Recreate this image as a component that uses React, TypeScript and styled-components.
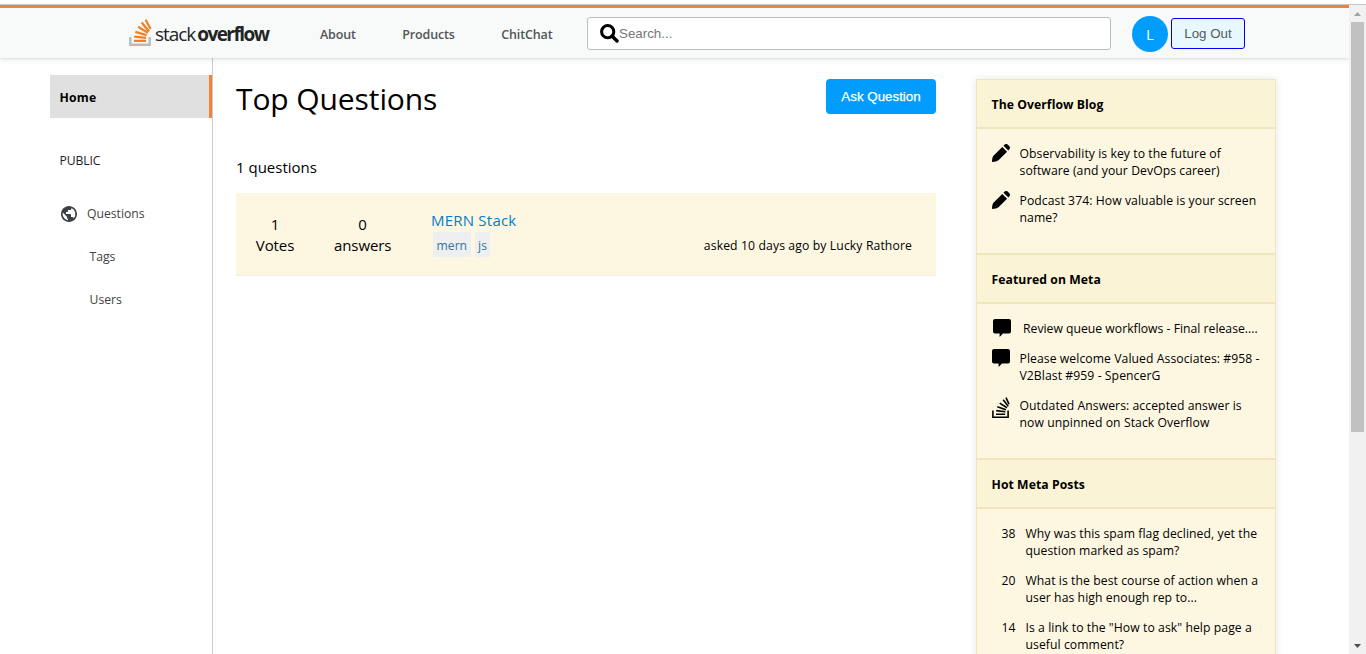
import React from 'react';
import styled, { createGlobalStyle } from 'styled-components';

const ui = `"Segoe UI", "Open Sans", "Noto Sans", sans-serif`;
const control = `"Liberation Sans", Arial, sans-serif`;

const GlobalStyle = createGlobalStyle`
  * { box-sizing: border-box; }
  body { margin: 0; background: #fff; font-family: ${ui}; font-weight: 400; color: #000; overflow: hidden; }
  h1, h4, p { margin: 0; font-weight: inherit; }
`;

const Window = styled.div`
  height: 654px;
  display: flex;
  flex-direction: column;
  overflow: hidden;
`;
const TopEdge = styled.div`
  flex: none;
  height: 5px;
  border-bottom: 1px solid #c6c8ca;
`;
const Viewport = styled.div`
  flex: 1;
  min-height: 0;
  display: flex;
`;
const Page = styled.div`
  width: 1349px;
  display: flex;
  flex-direction: column;
  overflow: hidden;
`;
const Scrollbar = styled.div`
  width: 17px;
  background: #f1f1f1;
  display: flex;
  flex-direction: column;
  align-items: center;
`;
const Arrow = styled.div<{ $down?: boolean }>`
  height: 17px;
  width: 17px;
  display: flex;
  align-items: center;
  justify-content: center;
  margin-top: ${p => (p.$down ? 'auto' : '0')};
  color: ${p => (p.$down ? '#505050' : '#a3a3a3')};
  svg { display: block; transform: ${p => (p.$down ? 'rotate(180deg)' : 'none')}; }
`;
const Thumb = styled.div`
  width: 13px;
  height: 410px;
  background: #c1c1c1;
`;

const Header = styled.header`
  position: relative;
  z-index: 1;
  flex: none;
  height: 53px;
  padding-left: 129px;
  border-top: 3px solid #f48236;
  background: #f8f9f9;
  box-shadow: 0 1px 2px rgba(0, 0, 0, 0.08), 0 2px 6px rgba(0, 0, 0, 0.08);
  display: flex;
  align-items: center;
`;
const Logo = styled.a`
  display: flex;
  width: 141px;
  height: 32px;
  svg { flex: none; margin-top: 1px; }
`;
const LogoText = styled.span`
  margin: 6px 0 0 3px;
  font: 400 19px/22px "Open Sans", sans-serif;
  letter-spacing: -1.05px;
  color: #222426;
  white-space: nowrap;
  b { font-weight: 700; margin-left: 2px; letter-spacing: -1.55px; }
`;
const Nav = styled.nav`
  display: flex;
  margin: 3px 0 0 50px;
  gap: 46.5px;
  width: 267px;
`;
const NavLink = styled.a`
  font: 600 12.5px/20px ${ui};
  letter-spacing: -0.15px;
  color: #525457;
`;
const Search = styled.div`
  width: 524px;
  height: 33px;
  border: 1px solid #bbbdbf;
  border-radius: 3px;
  background: #fff;
  display: flex;
  align-items: center;
  padding-left: 12px;
  color: #757575;
  font: 400 13.33px/16px ${control};
  span { padding-top: 2px; }
`;
const Avatar = styled.div`
  width: 36px;
  height: 36px;
  margin: 1px 3px 0 21px;
  border-radius: 50%;
  background: #009dff;
  color: #fff;
  display: flex;
  align-items: center;
  justify-content: center;
  font-size: 15px;
  line-height: 20px;
`;
const LogOut = styled.button`
  width: 74px;
  height: 31px;
  margin: 0;
  padding: 1px 0 0;
  border: 1px solid #0000ee;
  border-radius: 3px;
  background: #e7f8fe;
  color: #56595c;
  font: 400 13.33px/20px ${control};
`;

const Columns = styled.div`
  flex: 1;
  min-height: 0;
  display: flex;
  padding-left: 50px;
`;
const Sidebar = styled.aside`
  width: 163px;
  border-right: 1px solid #ccc;
  padding-top: 17px;
`;
const SideItem = styled.div<{ $active?: boolean; $indent?: number }>`
  height: 43px;
  display: flex;
  align-items: center;
  padding-left: ${p => p.$indent ?? 9.5}px;
  font-size: 12.2px;
  line-height: 17px;
  color: #404244;
  ${p => p.$active && `
    padding-top: 1px;
    background: #e0e0e0;
    border-right: 3px solid #f48236;
    font-weight: 700;
    letter-spacing: 0.2px;
    color: #000;
  `}
  svg { margin-right: 9.5px; }
`;
const SideLabel = styled.div`
  margin: 21px 0 10px;
  padding: 1px 0 0 9.5px;
  height: 43px;
  line-height: 42px;
  font-size: 12.2px;
  letter-spacing: -0.1px;
  color: #202224;
`;

const Main = styled.main`
  width: 700px;
  margin-left: 23px;
  padding-top: 20px;
`;
const TitleRow = styled.div`
  display: flex;
  justify-content: space-between;
`;
const Title = styled.h1`
  font-size: 30px;
  line-height: 41px;
  letter-spacing: -0.1px;
  white-space: nowrap;
`;
const AskButton = styled.button`
  width: 110px;
  height: 35px;
  margin-top: 1px;
  padding: 0;
  border: 0;
  border-radius: 4px;
  background: #009dff;
  color: #fff;
  font: 400 13.33px/16px ${control};
  -webkit-text-stroke: 0.25px #fff;
`;
const Count = styled.p`
  margin: 38px 0 15px;
  font-size: 15px;
  line-height: 21px;
`;
const Question = styled.article`
  height: 83px;
  display: flex;
  background: #fdf7e2;
  border-bottom: 1px solid #eceef0;
`;
const Stat = styled.div<{ $left: number; $width: number }>`
  margin-left: ${p => p.$left}px;
  width: ${p => p.$width}px;
  padding-top: 21px;
  font-size: 15px;
  line-height: 21px;
  letter-spacing: -0.1px;
  text-align: center;
`;
const Summary = styled.div`
  flex: 1;
  margin-left: 40px;
  padding: 17px 24px 0 0;
`;
const QuestionLink = styled.a`
  display: block;
  font-size: 15px;
  line-height: 21px;
  letter-spacing: 0.22px;
  color: #037ecb;
`;
const Meta = styled.div`
  display: flex;
  align-items: center;
  gap: 4px;
  padding: 1px 0 0 2px;
`;
const Tag = styled.span`
  height: 25px;
  padding: 1px 3.5px 0;
  background: #edeff0;
  color: #39739d;
  font-size: 12.2px;
  line-height: 25px;
`;
const Asked = styled.span`
  margin: 2px 0 0 auto;
  font-size: 12.2px;
  line-height: 17px;
  letter-spacing: 0.12px;
  white-space: nowrap;
`;

const Widget = styled.section`
  width: 300px;
  margin: 21px 0 0 40px;
  align-self: flex-start;
  box-shadow: 0 0 8px rgba(0, 0, 0, 0.1);
`;
const WidgetTitle = styled.h4`
  height: 49px;
  padding-left: 14.5px;
  border: 1px solid #f1e5bc;
  background: #fbf3d5;
  font-size: 12.2px;
  font-weight: 700;
  line-height: 49px;
  letter-spacing: 0.07px;
`;
const WidgetBody = styled.div<{ $numbered?: boolean }>`
  padding: 16px 0 27px ${p => (p.$numbered ? 24.5 : 15)}px;
  border: 1px solid #f1e5bc;
  background: #fdf7e2;
  display: flex;
  flex-direction: column;
  gap: 13px;
`;
const Entry = styled.div<{ $shift?: number }>`
  display: flex;
  font-size: 12.2px;
  line-height: 17px;
  letter-spacing: ${p => (p.$shift ? 0.01 : 0.07)}px;
  white-space: nowrap;
  svg { flex: none; margin: -1px ${p => 9.5 + (p.$shift ?? 0) * 2.5}px -6px ${p => p.$shift ?? 0}px; }
`;
const Score = styled.span`
  width: 24px;
`;

const Pencil = () => (
  <svg width="18" height="18" viewBox="0 0 18 18">
    <path d="M10.300 2.900l4.800 4.800-8.600 8.600Q4.700 18 0 18q0-4.700 1.700-6.500zM11.500 1.700l.7-.7q2-2 3.900-.1l1 1q1.900 1.900-.1 3.900l-.7.7z" />
  </svg>
);
const Bubble = () => (
  <svg width="18" height="18" viewBox="0 0 18 18">
    <path d="M2 0h14a2 2 0 0 1 2 2v10.500a2 2 0 0 1-2 2h-6L6.600 18v-3.500H2a2 2 0 0 1-2-2V2a2 2 0 0 1 2-2z" />
  </svg>
);
const StackMark = () => (
  <svg width="18" height="23" viewBox="0 -1 18 23" fill="none" stroke="#000" strokeWidth="1.600">
    <path d="M.9 13.500V20.200h15.200v-6.700M4 17.300h9.200M4.200 13.600l9.100 1.200M5.300 9.800l8.600 2.900M7.700 6.100l7.300 4.600M11.200 2.800l5 6.500M14 .6l3 6.600" />
  </svg>
);
const LogoMark = () => (
  <svg width="23" height="29" viewBox="0 0 23 29" fill="none">
    <path d="M1.300 19v7.700h19.400V19" stroke="#bcbbbb" strokeWidth="2.400" />
    <path d="M5 22.800h12M5.200 18.700l11.900 1.200M6.300 13.900l11.300 3.300M9.200 8.700l9.700 6.200M12.600 4.500l7.400 9M16.600 1.700l5 9.300" stroke="#f48024" strokeWidth="2.300" />
  </svg>
);
const Globe = () => (
  <svg width="18" height="18" viewBox="0 0 18 18" fill="#3b4045">
    <path d="M9 1C4.640 1 1 4.640 1 9c0 4.360 3.640 8 8 8 4.360 0 8-3.640 8-8 0-4.360-3.640-8-8-8zM8 15.320a6.460 6.460 0 0 1-4.300-2.740 6.460 6.460 0 0 1-.930-5.010L7 11.680v.800c0 .880.120 1.320 1 1.320v1.520zm5.720-2c-.200-.660-1-1.320-1.720-1.320h-1v-2c0-.440-.560-1-1-1H6V7h1c.440 0 1-.560 1-1V5h2c.880 0 1.400-.720 1.400-1.600v-.330a6.450 6.450 0 0 1 3.830 4.510 6.450 6.450 0 0 1-1.510 5.730v.010z" />
  </svg>
);
const Magnifier = () => (
  <svg width="19" height="19" viewBox="0 0 19 19" fill="none" stroke="#000">
    <circle cx="7.700" cy="7.700" r="6.100" strokeWidth="3" />
    <path d="M12 12l5 5" strokeWidth="3.400" strokeLinecap="round" />
  </svg>
);
const Triangle = () => (
  <svg width="7" height="4" viewBox="0 0 7 4"><path d="M0 4L3.500 0L7 4z" fill="currentColor" /></svg>
);

const hot = [
  { score: 38, lines: ['Why was this spam flag declined, yet the', 'question marked as spam?'] },
  { score: 20, lines: ['What is the best course of action when a', 'user has high enough rep to...'] },
  { score: 14, lines: ['Is a link to the "How to ask" help page a', 'useful comment?'] },
];

const Lines = ({ lines }: { lines: string[] }) => (
  <span>
    {lines.map((line, i) => (
      <React.Fragment key={line}>
        {i > 0 && <br />}
        {line}
      </React.Fragment>
    ))}
  </span>
);

export default function App() {
  return (
    <Window>
      <GlobalStyle />
      <TopEdge />
      <Viewport>
        <Page>
          <Header>
            <Logo>
              <LogoMark />
              <LogoText>stack<b>overflow</b></LogoText>
            </Logo>
            <Nav>
              <NavLink>About</NavLink>
              <NavLink>Products</NavLink>
              <NavLink>ChitChat</NavLink>
            </Nav>
            <Search><Magnifier /><span>Search...</span></Search>
            <Avatar>L</Avatar>
            <LogOut>Log Out</LogOut>
          </Header>
          <Columns>
            <Sidebar>
              <SideItem $active>Home</SideItem>
              <SideLabel>PUBLIC</SideLabel>
              <SideItem><Globe />Questions</SideItem>
              <SideItem $indent={39.5}>Tags</SideItem>
              <SideItem $indent={39.5}>Users</SideItem>
            </Sidebar>
            <Main>
              <TitleRow>
                <Title>Top Questions</Title>
                <AskButton>Ask Question</AskButton>
              </TitleRow>
              <Count>1 questions</Count>
              <Question>
                <Stat $left={19} $width={40}>1<br />Votes</Stat>
                <Stat $left={39} $width={57}>0<br />answers</Stat>
                <Summary>
                  <QuestionLink>MERN Stack</QuestionLink>
                  <Meta>
                    <Tag>mern</Tag>
                    <Tag>js</Tag>
                    <Asked>asked 10 days ago by Lucky Rathore</Asked>
                  </Meta>
                </Summary>
              </Question>
            </Main>
            <Widget>
              <WidgetTitle>The Overflow Blog</WidgetTitle>
              <WidgetBody>
                <Entry><Pencil /><Lines lines={['Observability is key to the future of', 'software (and your DevOps career)']} /></Entry>
                <Entry><Pencil /><Lines lines={['Podcast 374: How valuable is your screen', 'name?']} /></Entry>
              </WidgetBody>
              <WidgetTitle>Featured on Meta</WidgetTitle>
              <WidgetBody>
                <Entry $shift={1}><Bubble /><Lines lines={['Review queue workflows - Final release....']} /></Entry>
                <Entry><Bubble /><Lines lines={['Please welcome Valued Associates: #958 -', 'V2Blast #959 - SpencerG']} /></Entry>
                <Entry><StackMark /><Lines lines={['Outdated Answers: accepted answer is', 'now unpinned on Stack Overflow']} /></Entry>
              </WidgetBody>
              <WidgetTitle>Hot Meta Posts</WidgetTitle>
              <WidgetBody $numbered>
                {hot.map(h => (
                  <Entry key={h.score}><Score>{h.score}</Score><Lines lines={h.lines} /></Entry>
                ))}
              </WidgetBody>
            </Widget>
          </Columns>
        </Page>
        <Scrollbar>
          <Arrow><Triangle /></Arrow>
          <Thumb />
          <Arrow $down><Triangle /></Arrow>
        </Scrollbar>
      </Viewport>
    </Window>
  );
}
